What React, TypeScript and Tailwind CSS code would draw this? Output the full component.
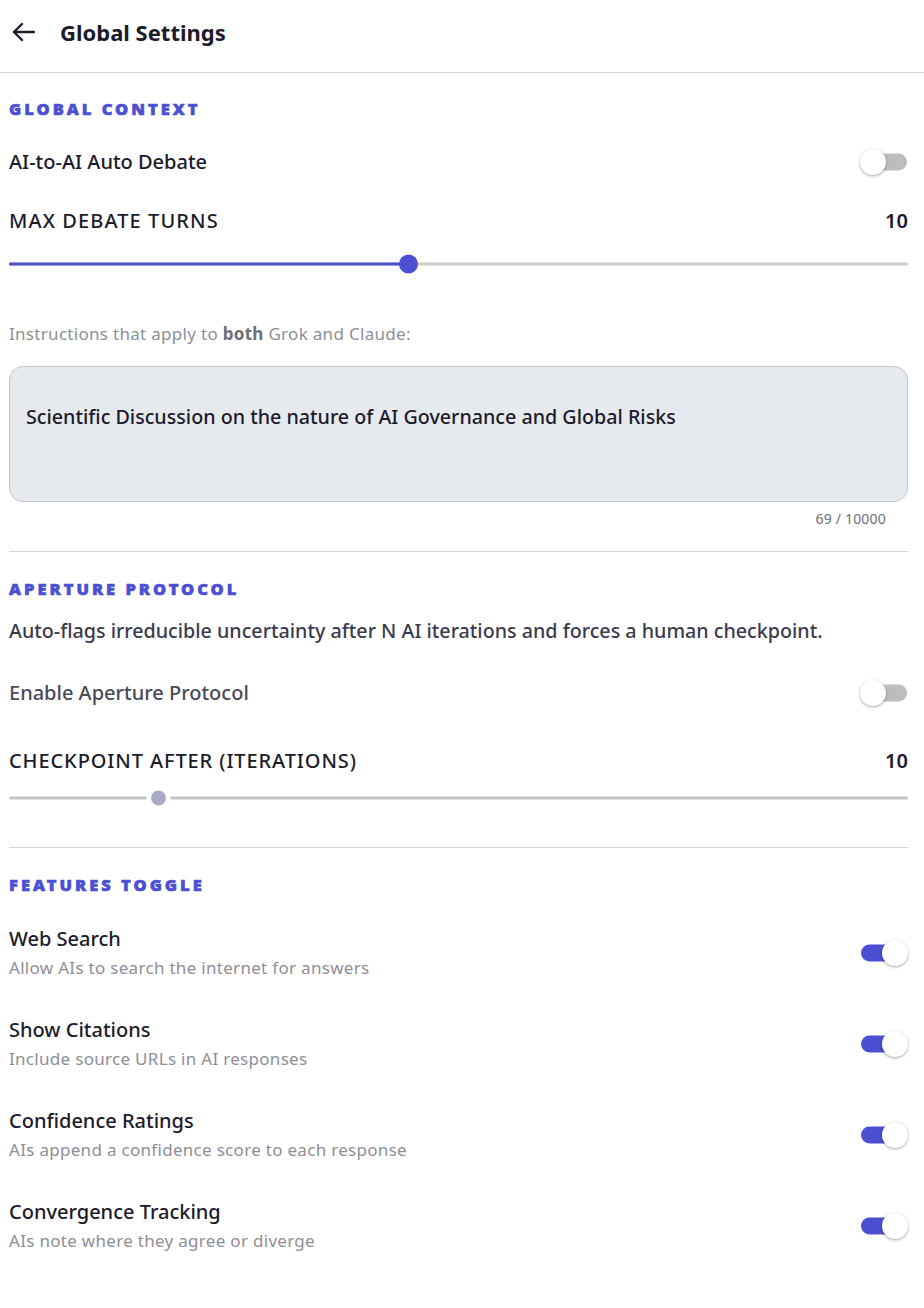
import React from "react";

const font = { fontFamily: '"Noto Sans", "Open Sans", sans-serif' };

function Switch({ on }: { on: boolean }) {
  return (
    <div className="relative h-[26px] w-[48px] shrink-0">
      <div
        className={
          "absolute left-[1px] right-[1px] top-1/2 h-[17px] -translate-y-1/2 rounded-full " +
          (on ? "bg-[#4b4fd1]" : "bg-[#bdbdbd]")
        }
      />
      <div
        className={
          "absolute top-0 h-[26px] w-[26px] rounded-full bg-white shadow-[0_1px_3px_rgba(0,0,0,0.35)] " +
          (on ? "right-0" : "left-0")
        }
      />
    </div>
  );
}

function SectionTitle({ children }: { children: React.ReactNode }) {
  return (
    <div className="h-[16px] text-[16.5px] font-black uppercase tracking-[3px] text-[#4b4fd1] leading-[16px] [-webkit-text-stroke:0.6px_#4b4fd1]">
      {children}
    </div>
  );
}

function Feature({ title, desc }: { title: string; desc: string }) {
  return (
    <div className="flex items-center justify-between">
      <div className="flex flex-col">
        <div className="text-[20px] font-medium leading-[28px] text-[#1c1b2b]">{title}</div>
        <div className="mt-[2px] text-[17px] tracking-[0.3px] leading-[26px] text-[#8e8e98]">{desc}</div>
      </div>
      <Switch on />
    </div>
  );
}

export default function App() {
  return (
    <div className="min-h-[1308px] bg-white" style={font}>
      <header className="flex h-[73px] items-center gap-[25px] border-b border-[#d6d6d6] pb-[9px] pl-[12px]">
        <svg width="23" height="20" viewBox="0 0 23 20" fill="none" stroke="#1c1b2b" strokeWidth="2.4" strokeLinecap="round" strokeLinejoin="round">
          <path d="M22 10H2M10 2L2 10L10 18" />
        </svg>
        <h1 className="text-[22px] font-bold text-[#1c1b2b] leading-none">Global Settings</h1>
      </header>

      <div className="pl-[9px] pr-[16px]">
        <section className="pt-[28px]">
          <SectionTitle>Global Context</SectionTitle>
          <div className="mt-[32px] flex h-[26px] items-center justify-between">
            <div className="text-[20px] font-medium leading-[26px] text-[#1c1b2b]">AI-to-AI Auto Debate</div>
            <Switch on={false} />
          </div>
          <div className="mt-[33px] flex h-[26px] items-center justify-between">
            <div className="text-[20px] font-medium leading-[26px] tracking-[1.1px] text-[#1c1b2b]">MAX DEBATE TURNS</div>
            <div className="text-[20px] font-semibold leading-[26px] text-[#1c1b2b]">10</div>
          </div>
          <div className="relative mt-[20px] h-[20px]">
            <div className="absolute left-0 right-0 top-1/2 h-[3px] -translate-y-1/2 rounded-full bg-[#cccccc]" />
            <div className="absolute left-0 top-1/2 h-[3px] w-[400px] -translate-y-1/2 rounded-full bg-[#4b4fd1]" />
            <div className="absolute left-[390px] top-1/2 h-[19px] w-[19px] -translate-y-1/2 rounded-full bg-[#4b4fd1]" />
          </div>

          <p className="mt-[48px] text-[17px] leading-[24px] tracking-[0.3px] text-[#8e8e98]">
            Instructions that apply to <span className="font-bold text-[#6e6e7a]">both</span> Grok and Claude:
          </p>
          <div className="mt-[20px] h-[136px] rounded-[14px] border border-[#c4c4cc] bg-[#e6e9ed] px-[16px] pt-[36px]">
            <div className="text-[19.7px] font-medium leading-[28px] text-[#1c1b2b]">
              Scientific Discussion on the nature of AI Governance and Global Risks
            </div>
          </div>
          <div className="mt-[9px] pr-[22px] text-right text-[14px] leading-[16px] tracking-[0.2px] text-[#6e6e7a]">69 / 10000</div>
          <div className="mt-[24px] border-b border-[#d6d6d6]" />
        </section>

        <section className="pt-[29px]">
          <SectionTitle>Aperture Protocol</SectionTitle>
          <p className="mt-[20px] text-[19.7px] font-medium leading-[28px] text-[#3a3a4c]">
            Auto-flags irreducible uncertainty after N AI iterations and forces a human checkpoint.
          </p>
          <div className="mt-[35px] flex h-[26px] items-center justify-between">
            <div className="text-[20px] font-medium leading-[26px] text-[#4a4a58]">Enable Aperture Protocol</div>
            <Switch on={false} />
          </div>
          <div className="mt-[42px] flex h-[26px] items-center justify-between">
            <div className="text-[20px] font-medium leading-[26px] tracking-[0.9px] text-[#1c1b2b]">CHECKPOINT AFTER (ITERATIONS)</div>
            <div className="text-[20px] font-semibold leading-[26px] text-[#1c1b2b]">10</div>
          </div>
          <div className="relative mt-[14px] h-[20px]">
            <div className="absolute left-0 top-1/2 h-[3px] w-[138px] -translate-y-1/2 rounded-full bg-[#c4c4c4]" />
            <div className="absolute left-[161px] right-0 top-1/2 h-[3px] -translate-y-1/2 rounded-full bg-[#c4c4c4]" />
            <div className="absolute left-[142px] top-1/2 h-[15px] w-[15px] -translate-y-1/2 rounded-full bg-[#a9aac6]" />
          </div>
          <div className="mt-[39px] border-b border-[#d6d6d6]" />
        </section>

        <section className="pt-[29px]">
          <SectionTitle>Features Toggle</SectionTitle>
          <div className="mt-[32px] flex flex-col gap-[35px]">
            <Feature title="Web Search" desc="Allow AIs to search the internet for answers" />
            <Feature title="Show Citations" desc="Include source URLs in AI responses" />
            <Feature title="Confidence Ratings" desc="AIs append a confidence score to each response" />
            <Feature title="Convergence Tracking" desc="AIs note where they agree or diverge" />
          </div>
        </section>
      </div>
    </div>
  );
}
